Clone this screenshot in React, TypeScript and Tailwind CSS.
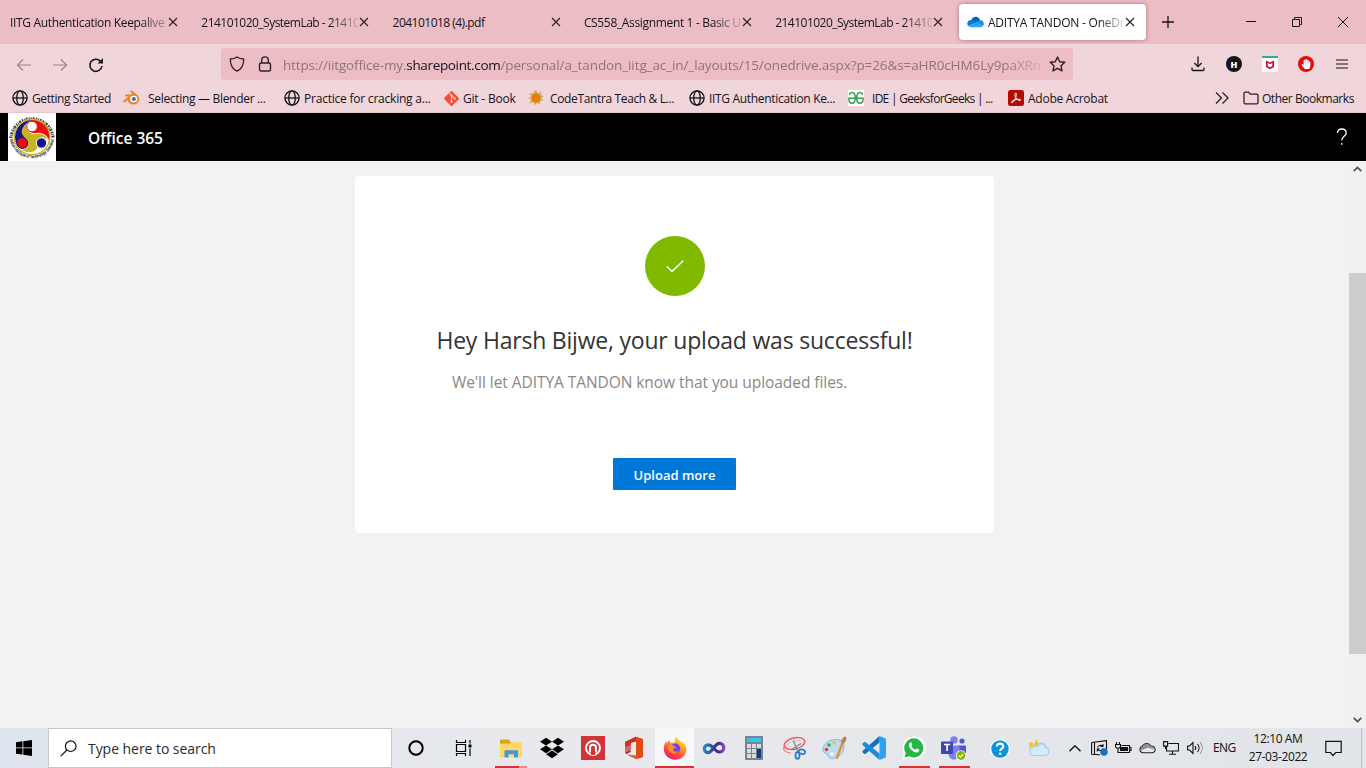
import React from "react";
import { FaDropbox, FaGitAlt, FaHandPaper } from "react-icons/fa";

/* ---------- shared icons ---------- */

const Globe = () => (
  <svg width="16" height="16" viewBox="0 0 16 16" fill="none" stroke="#15141a" strokeWidth="1.3">
    <circle cx="8" cy="8" r="7.1" />
    <ellipse cx="8" cy="8" rx="3.3" ry="7.1" />
    <path d="M1 8h14" />
  </svg>
);

const Close = () => (
  <svg width="10" height="10" viewBox="0 0 10 10" stroke="#2b2227" strokeWidth="1.15" className="shrink-0">
    <path d="M1 1l8 8M9 1L1 9" />
  </svg>
);

const Blender = () => (
  <svg width="17" height="16" viewBox="0 0 17 16" fill="none">
    <path d="M1.300 11.300L8 6M3 5.400H10M8.300 1.500L14 6" stroke="#e58325" strokeWidth="2" strokeLinecap="round" />
    <ellipse cx="10.300" cy="9.200" rx="6" ry="5.400" fill="#ea8a2a" />
    <ellipse cx="10.700" cy="9" rx="3.600" ry="3.200" fill="#fff" />
    <circle cx="10.900" cy="8.900" r="2" fill="#2f6fae" />
  </svg>
);

const Sun = () => (
  <svg width="16" height="16" viewBox="0 0 16 16">
    <path d="M8.500.5l1.300 2.700L13.500 1.500l-.8 3.600 3 1-2.200 2.200 1.700 2.600-3.300.2.3 3.500L8.800 13l-2.300 2.400-.9-3.300-4 1.400L3.200 9.500.3 8l2.900-1.500L1.500 3l3.700.6 1-3z" fill="#ccb055" />
    <circle cx="8" cy="8" r="4.500" fill="#ec7a14" />
  </svg>
);

const Acrobat = () => (
  <svg width="16" height="16" viewBox="0 0 16 16" fill="none">
    <rect width="16" height="16" rx="2.5" fill="#b30b00" />
    <path d="M7.500 3.100c1.200-.2.9 2.100.5 3.600C7.300 9 5.300 12.300 4 12.700c-1.300.2-.6-1.400 1.200-2.200 2-.9 5.200-1.500 6.900-1.100 1.300.4.5 1.500-.8 1.100-1.700-.5-3.400-2.400-4-4-.5-1.400-.7-3.200.2-3.400z" stroke="#fff" strokeWidth="1" />
  </svg>
);

const Gfg = () => (
  <svg width="16" height="16" viewBox="0 0 16 16" fill="none">
    <rect width="16" height="16" fill="#fff" />
    <path d="M1.300 4.800C2 2.500 4 2 5.300 2.700 7.300 3.800 7.300 6 7.300 8c0 3-1 5.300-3.300 5.300C2 13.300.9 11.500.9 8.200h14.200c0 3.300-1.100 5.100-3.100 5.100-2.300 0-3.300-2.300-3.300-5.300 0-2 0-4.200 2-5.300 1.300-.7 3.300-.2 4 2.100" stroke="#3a9d55" strokeWidth="1.500" />
  </svg>
);

const OneDrive = () => (
  <svg width="17" height="12" viewBox="0 0 17 12">
    <path d="M4 4.500C5 1.500 8 0 10.600 1.200c1.300.6 2.200 1.800 2.500 3L9 7z" fill="#0a64c0" />
    <path d="M4.200 4C2 3.900.3 5.500.3 7.600c0 1 .4 1.900 1 2.500L10 6.500 6.800 4.600C6 4.200 5.100 4 4.200 4z" fill="#1279d6" />
    <path d="M9 6l3.800-1.800c2.500-.2 4 1.600 4 3.600 0 .9-.3 1.600-.8 2.200z" fill="#1490df" />
    <path d="M1.300 10.100L10 6.200l6 3.800c-.6.8-1.600 1.200-2.700 1.200H4.200c-1.200 0-2.200-.4-2.900-1.100z" fill="#28a8ea" />
  </svg>
);

/* ---------- browser chrome ---------- */

const tabs = [
  { title: "IITG Authentication Keepalive", track: "tracking-[-0.34px]", fade: "[mask-image:linear-gradient(to_right,black_82%,transparent_106%)]" },
  { title: "214101020_SystemLab - 21410", track: "tracking-[-0.52px]", fade: "[mask-image:linear-gradient(to_right,black_82%,transparent_103%)]" },
  { title: "204101018 (4).pdf", track: "tracking-[-0.52px]", fade: "" },
  { title: "CS558_Assignment 1 - Basic U", track: "tracking-[-0.34px]", fade: "[mask-image:linear-gradient(to_right,black_82%,transparent_103%)]" },
  { title: "214101020_SystemLab - 21410", track: "tracking-[-0.52px]", fade: "[mask-image:linear-gradient(to_right,black_82%,transparent_103%)]" },
];

function TabStrip() {
  return (
    <div className="flex h-11 items-center bg-[#edbdc5]">
      {tabs.map((t, i) => (
        <div key={i} className="flex h-9 w-[191.3px] shrink-0 items-center pl-[10px]">
          <span className={`w-[157px] whitespace-nowrap pt-[2px] text-[12px] ${t.track} ${t.fade}`}>{t.title}</span>
          <span className="ml-[1px] flex">
            <Close />
          </span>
        </div>
      ))}
      <div className="ml-[2.5px] flex h-[36px] w-[187px] shrink-0 items-center rounded-[4px] bg-white pl-[8px] shadow-[0_0_4px_rgba(80,20,40,0.45)]">
        <OneDrive />
        <span className="ml-1 w-[136px] whitespace-nowrap pt-[2px] text-[12px] tracking-[-0.22px] [mask-image:linear-gradient(to_right,black_82%,transparent_102%)]">
          ADITYA TANDON - OneDr
        </span>
        <span className="ml-[1px] flex">
          <Close />
        </span>
      </div>
      <svg width="12" height="12" viewBox="0 0 12 12" stroke="#15141a" strokeWidth="1.3" className="ml-[16px] shrink-0">
        <path d="M6 0v12M0 6h12" />
      </svg>
      <svg width="106" height="12" viewBox="0 0 106 12" fill="none" stroke="#15141a" className="ml-auto mr-[17px] shrink-0">
        <path d="M3 5.500h10" />
        <path d="M49.500 3.500h7v7h-7zM51.500 3.500v-2h7v7h-2" />
        <path d="M95 1l10 10M105 1L95 11" />
      </svg>
    </div>
  );
}

function Toolbar() {
  return (
    <div className="flex h-[40px] items-center bg-[#f0d5da] text-[#15141a]">
      <svg width="90" height="16" viewBox="0 0 90 16" fill="none" stroke="#9c8489" strokeWidth="1.2" className="ml-[16px] mt-[1px] shrink-0">
        <path d="M15 8H1.500M7 2.500L1.500 8 7 13.500" />
        <path d="M37 8h13.500M45 2.500L50.500 8 45 13.500" />
        <path d="M84.500 4.200A6.100 6.100 0 1 0 86 9" stroke="#15141a" strokeWidth="1.500" />
        <path d="M87 1v5.500h-5.500z" fill="#15141a" stroke="none" />
      </svg>
      <div className="ml-[115px] flex h-8 w-[852px] shrink-0 items-center rounded-[4px] bg-[#edbdc5] pl-[8px]">
        <svg width="16" height="16" viewBox="0 0 16 16" fill="none" stroke="#2b2227" strokeWidth="1.3" className="shrink-0">
          <path d="M8 .9c2 1.500 4.300 2 6.700 2.100.1 5.600-2 10-6.700 12.200C3.300 13 1.200 8.600 1.300 3 3.700 2.900 6 2.400 8 .9z" strokeLinejoin="round" />
        </svg>
        <svg width="14" height="16" viewBox="0 0 14 16" fill="none" stroke="#2b2227" strokeWidth="1.4" className="ml-[13px] shrink-0">
          <rect x="1.5" y="7" width="11" height="8" rx="1.5" />
          <path d="M3.700 7V4.200a3.300 3.300 0 0 1 6.600 0V7" />
        </svg>
        <div className="ml-[11px] w-[759px] whitespace-nowrap pt-[2px] text-[13.5px] leading-[22px] tracking-[-0.16px] text-[#8f747a] [mask-image:linear-gradient(to_right,black_95%,transparent_101%)]">
          https://iitgoffice-my.
          <span className="tracking-[-0.34px] text-[#15141a]">sharepoint.com</span>
          <span className="tracking-[-0.1px]">/personal/a_tandon_iitg_ac_in/_layouts/15/onedrive.aspx?p=26&amp;s=aHR0cHM6Ly9paXRn</span>
        </div>
        <svg width="17" height="16" viewBox="0 0 17 16" fill="none" stroke="#2b2227" strokeWidth="1.4" strokeLinejoin="round" className="ml-[7px] shrink-0">
          <path d="M8.500 1l2.200 4.700 5.100.6-3.800 3.500 1 5.100-4.500-2.500L4 14.900l1-5.100L1.200 6.300l5.100-.6z" />
        </svg>
      </div>
      <svg width="14" height="16" viewBox="0 0 14 16" fill="none" stroke="#15141a" strokeWidth="1.3" className="ml-auto mr-[21px] shrink-0">
        <path d="M7 .5v10M3.300 7L7 10.700 10.700 7M1 11.500v1.800q0 1.200 1.200 1.200h9.600q1.200 0 1.200-1.200v-1.800" />
      </svg>
      <span className="mr-[20px] flex size-4 shrink-0 items-center justify-center rounded-full bg-[#15141a] text-[9px] font-extrabold leading-none text-white">
        H
      </span>
      <svg width="16" height="16" viewBox="0 0 16 16" className="mr-[20px] shrink-0">
        <rect width="16" height="16" fill="#fff" />
        <rect width="16" height="2" fill="#3fa58c" />
        <path d="M4 4.500l4 2 4-2v6.500l-4 2.200L4 11zM5.700 7v3l2.300 1.300 2.300-1.300V7L8 8.200z" fill="#c8102e" fillRule="evenodd" />
      </svg>
      <span className="mr-[22px] flex size-4 shrink-0 items-center justify-center rounded-full bg-[#e40d0d]">
        <FaHandPaper size={10} color="#fff" />
      </span>
      <svg width="12" height="10" viewBox="0 0 12 10" stroke="#15141a" strokeWidth="1.2" className="mr-[18px] shrink-0">
        <path d="M0 1h12M0 5h12M0 9h12" />
      </svg>
    </div>
  );
}

const bookmarks = [
  { w: "w-[111px]", gap: "gap-1", icon: <Globe />, text: "Getting Started", track: "tracking-[-0.4px]" },
  { w: "w-[161px]", gap: "gap-2", icon: <Blender />, text: "Selecting — Blender ...", track: "tracking-[-0.31px]" },
  { w: "w-[159px]", gap: "gap-1", icon: <Globe />, text: "Practice for cracking a...", track: "tracking-[-0.22px]" },
  { w: "w-[85px]", gap: "gap-[3px]", icon: <FaGitAlt size={17} color="#f05133" />, text: "Git - Book", track: "tracking-[-0.2px]" },
  { w: "w-[161px]", gap: "gap-[6px]", icon: <Sun />, text: "CodeTantra Teach & L...", track: "tracking-[-0.36px]" },
  { w: "w-[159px]", gap: "gap-1", icon: <Globe />, text: "IITG Authentication Ke...", track: "tracking-[-0.32px]" },
  { w: "w-[160px]", gap: "gap-2", icon: <Gfg />, text: "IDE | GeeksforGeeks | ...", track: "tracking-[-0.72px]" },
  { w: "w-[111px]", gap: "gap-1", icon: <Acrobat />, text: "Adobe Acrobat", track: "tracking-[-0.25px]" },
];

function Bookmarks() {
  return (
    <div className="flex h-[29px] items-center border-b border-[#edc3ca] bg-[#f0d5da] pl-3 text-[12px]">
      {bookmarks.map((b) => (
        <div key={b.text} className={`flex shrink-0 items-center whitespace-nowrap ${b.w} ${b.gap}`}>
          {b.icon}
          <span className={`pt-[2px] ${b.track}`}>{b.text}</span>
        </div>
      ))}
      <svg width="14" height="12" viewBox="0 0 14 12" fill="none" stroke="#2b2227" strokeWidth="1.3" className="ml-auto mr-[14px] shrink-0">
        <path d="M1 .5L6.500 6 1 11.500M7.500.5L13 6l-5.500 5.500" />
      </svg>
      <svg width="16" height="14" viewBox="0 0 16 14" fill="none" stroke="#2b2227" strokeWidth="1.3" className="mr-[3px] shrink-0">
        <path d="M1 11.500V2.500a1.300 1.300 0 0 1 1.300-1.300h3.200l1.700 2h6.500A1.300 1.300 0 0 1 15 4.500v7a1.300 1.300 0 0 1-1.300 1.300H2.300A1.300 1.300 0 0 1 1 11.500z" />
      </svg>
      <span className="w-[104px] shrink-0 whitespace-nowrap pt-[2px] tracking-[-0.47px]">Other Bookmarks</span>
    </div>
  );
}

/* ---------- page ---------- */

const Emblem = () => (
  <svg width="48" height="48" viewBox="0 0 48 48" className="shrink-0">
    <rect width="48" height="48" fill="#fff" />
    <path d="M2.800 25A21.300 21.300 0 0 1 45.200 25" fill="none" stroke="#444" strokeWidth="3.200" strokeDasharray="1.500 .9 .8 .7 2 1.100" />
    <path id="emblemArc" d="M2 26A22.200 22.200 0 0 0 46 26" fill="none" />
    <text fontSize="4.300" fill="#111" fontWeight="700" textLength="64" lengthAdjust="spacingAndGlyphs">
      <textPath href="#emblemArc">Indian Institute of Technology Guwahati</textPath>
    </text>
    <circle cx="24" cy="24" r="17.800" fill="#fff" stroke="#c8b420" strokeWidth="1.400" />
    <path d="M24 7A17 17 0 0 0 9 32c4 5 9 4 11 0 2-5-6-8-5-14 .5-5 4-9 9-11z" fill="#15158c" />
    <path d="M23 7a17 17 0 0 1 18 20c-2-5-7-8-12-7-6 1-11-3-9-9z" fill="#ee0d0d" />
    <path d="M18 11c-6 5-5 10-1 14 4 5 4 10-3 12 9 5 17 1 16-7-1-5 5-8 10-3-2-6-8-7-12-6-6 1-10-4-10-10z" fill="#c8b420" />
    <circle cx="24" cy="13.500" r="5.300" fill="#fff" stroke="#ee0d0d" />
    <circle cx="14.300" cy="30" r="5.300" fill="#ee0d0d" stroke="#15158c" />
    <circle cx="33.500" cy="30" r="5.200" fill="#15158c" stroke="#fff" />
  </svg>
);

function SuiteHeader() {
  return (
    <header className="flex h-12 items-center bg-black pl-2 text-white">
      <Emblem />
      <span className="ml-8 pt-[4px] text-[15.5px] font-semibold tracking-[0px]">Office 365</span>
      <svg width="12" height="18" viewBox="0 0 12 18" fill="none" stroke="#fff" strokeWidth="1.3" className="ml-auto mr-[18px]">
        <path d="M1.500 5C1.500 2.300 3.200 1 5.700 1s4.500 1.400 4.500 3.900c0 3-4.400 3.800-4.400 7.300" />
        <path d="M5.800 15v1.800" />
      </svg>
    </header>
  );
}

function Content() {
  return (
    <main className="flex h-[567px] bg-[#f2f2f2]">
      <div className="flex grow justify-center pt-[15px]">
        <section className="flex h-[357px] w-[639px] flex-col items-center rounded-[4px] bg-white pt-[60px]">
          <div className="flex size-[60px] items-center justify-center rounded-full bg-[#7fba00]">
            <svg width="18" height="13" viewBox="0 0 18 13" fill="none" stroke="#fff" strokeWidth="1.4" className="mt-[1px]">
              <path d="M.7 6.300l5.300 5.300L17.200.7" />
            </svg>
          </div>
          <h1 className="mt-[27px] whitespace-nowrap text-[23px] leading-[34px] tracking-[-0.21px] text-[#333]">
            Hey Harsh Bijwe, your upload was successful!
          </h1>
          <p className="mt-[14px] mr-[50px] whitespace-nowrap text-[15.5px] leading-[22px] tracking-[-0.06px] text-[#8a8886]">
            We'll let ADITYA TANDON know that you uploaded files.
          </p>
          <button className="mt-[65px] h-8 w-[123px] whitespace-nowrap rounded-[1px] bg-[#0078d7] pt-[3px] text-[13px] font-semibold text-white">
            Upload more
          </button>
        </section>
      </div>
      <div className="flex w-[17px] flex-col items-center bg-[#f1f1f1]">
        <svg width="9" height="6" viewBox="0 0 9 6" fill="none" stroke="#505050" strokeWidth="1.8" className="mt-[5px]">
          <path d="M.7 5.200L4.500 1.400l3.800 3.800" />
        </svg>
        <div className="mt-[101px] h-[381px] w-full bg-[#cdcdcd]" />
        <svg width="9" height="6" viewBox="0 0 9 6" fill="none" stroke="#505050" strokeWidth="1.8" className="mt-auto mb-[5px]">
          <path d="M.7.8l3.800 3.800L8.300.8" />
        </svg>
      </div>
    </main>
  );
}

/* ---------- taskbar ---------- */

const Explorer = () => (
  <svg width="22" height="19" viewBox="0 0 22 19">
    <path d="M0 1.500C0 .7.500.500 1 .500h8l1.500 2.500H21v15H1c-.6 0-1-.4-1-1z" fill="#dba21a" />
    <path d="M0 4.500h10l1.500-1.500H21c.5 0 1 .3 1 .8V17c0 .6-.4 1-1 1H1c-.6 0-1-.4-1-1z" fill="#ffd76b" />
    <path d="M4.500 18.500v-6c0-.8.500-1.300 1.300-1.300h11c.8 0 1.200.5 1.200 1.300v6h-4v-3.300H8.500v3.300z" fill="#3c9bdc" />
  </svg>
);

const RedApp = () => (
  <svg width="24" height="24" viewBox="0 0 24 24" fill="none">
    <rect width="24" height="24" fill="#d13438" />
    <circle cx="12" cy="12" r="7" stroke="#fff" strokeWidth="1.900" />
    <path d="M9 16.500v-4.700a3 3 0 0 1 6 0v4.700" stroke="#fff" strokeWidth="1.900" />
    <path d="M10 17.500h4" stroke="#d13438" strokeWidth="3" />
  </svg>
);

const Office = () => (
  <svg width="20" height="24" viewBox="0 0 20 24">
    <path d="M1 6L12 .8l1.500.5V5L6.500 7v9L2.500 18 1 17z" fill="#b5201c" />
    <path d="M1 6L12 .8V5L6.500 7v6L1 17z" fill="#c8321f" />
    <path d="M12 .8L19 3v18l-7 2.200z" fill="#e34a12" />
    <path d="M2.500 18.500L12 19.500V23.200z" fill="#e2574e" />
    <path d="M1 11v6l5.500-3V9z" fill="#d9627a" />
  </svg>
);

const Firefox = () => (
  <svg width="24" height="24" viewBox="0 0 24 24">
    <defs>
      <linearGradient id="ffOuter" x1=".8" y1="0" x2=".25" y2="1">
        <stop offset="0" stopColor="#fff04a" />
        <stop offset=".4" stopColor="#ff9a1f" />
        <stop offset=".75" stopColor="#ff3a4c" />
        <stop offset="1" stopColor="#e3158a" />
      </linearGradient>
    </defs>
    <path d="M13.500.5c.4 2 2 3 3.500 4.500 1 .9 1.600 1.800 2 2.800.3-.7.3-1.500.1-2.300 2.600 2 4.200 5 4.200 7.700 0 6-5 10.500-11.100 10.500C5.700 23.700.8 19 .8 12.800c0-2.800.9-5.600 2.700-7.500 0 .7.1 1.300.4 1.800C4.800 5.500 5.500 4.700 6.700 4c-.1 1 .2 2.200.9 3 1.900-.6 3.400-.5 4.700 0-1-2-.7-4.700 1.200-6.500z" fill="url(#ffOuter)" />
    <circle cx="12.200" cy="12.500" r="5" fill="#7542e5" />
    <path d="M5.500 9.500c2-1 4.500-.6 5.700.5.800.8 1.500 1 2.300 1-.6 1.600-3 1.200-3.500 2.500-.5 1.500 2.500 3 5 1.500-1.500 3.500-7 3.500-9 .2-1-1.600-1.100-3.800-.5-5.700z" fill="#ff8a2a" />
  </svg>
);

const VisualStudio = () => (
  <svg width="24" height="16" viewBox="0 0 24 16" fill="none">
    <defs>
      <linearGradient id="vsLoop" x1="0" y1="0" x2="1" y2="0">
        <stop offset="0" stopColor="#2d86bd" />
        <stop offset=".45" stopColor="#264a94" />
        <stop offset=".7" stopColor="#4b1f85" />
        <stop offset="1" stopColor="#7a4fb0" />
      </linearGradient>
    </defs>
    <path
      d="M12.300 9C10 6 8.500 4.800 6.300 4.800A3.900 3.900 0 0 0 2.300 8.600c0 2.400 1.700 4 3.900 4C10 12.600 12.500 3.300 17.500 3.300c2.600 0 4.300 1.900 4.300 4.300s-1.700 4.400-4.100 4.400c-2.200 0-3.700-1.200-5.400-3z"
      stroke="url(#vsLoop)"
      strokeWidth="3.200"
    />
  </svg>
);

const Calculator = () => (
  <svg width="18" height="24" viewBox="0 0 18 24">
    <rect width="18" height="24" rx=".7" fill="#7a8490" />
    <rect x="2" y="2" width="14" height="4" fill="#32c5f4" />
    <path d="M2 8h4v4H2zM7 8h4v4H7zM12 8h4v4h-4zM2 13h4v4H2zM7 13h4v4H7zM2 18h4v4H2zM7 18h4v4H7z" fill="#d9dde0" />
    <path d="M12 13h4v9h-4z" fill="#0b3f82" />
  </svg>
);

const Snip = () => (
  <svg width="24" height="24" viewBox="0 0 24 24" fill="none">
    <ellipse cx="12.500" cy="7.500" rx="10.500" ry="5.600" stroke="#ee5a5f" strokeWidth="1.500" transform="rotate(-14 12.500 7.500)" />
    <path d="M2 11c-1.500 3 2 6 7 6" stroke="#f08083" strokeWidth="1.200" />
    <path d="M4.500 10.500C5 7 12 4 18.500 4.500" stroke="#f6b4b5" />
    <path d="M11.300 4.500l4.700 11.500M19 7.500L9.500 13.500" stroke="#858c94" strokeWidth="1.400" />
    <g stroke="#2b7cd0" strokeWidth="1.800">
      <ellipse cx="15.500" cy="19.500" rx="2" ry="3.300" />
      <ellipse cx="20" cy="15.700" rx="3.200" ry="2.200" transform="rotate(15 20 15.700)" />
    </g>
  </svg>
);

const Paint = () => (
  <svg width="25" height="24" viewBox="0 0 25 24">
    <path d="M1 15C-.3 9 6 3.800 13 3.500c5-.2 8.800 2 9 6.500.3 6-5 12.500-12 12.500-4 0-3.500-3-5-4.500-1.200-1.200-3.500-1-4-3z" fill="#b8dcf0" stroke="#7fa9c4" strokeWidth=".8" />
    <circle cx="7" cy="9" r="1.800" fill="#3fae49" />
    <circle cx="12" cy="6.800" r="1.800" fill="#f2c230" />
    <circle cx="4.500" cy="13.500" r="1.700" fill="#e23b2e" />
    <circle cx="10" cy="18" r="1.800" fill="#fff" />
    <path d="M20.500 6.500L15 22" stroke="#e2902f" strokeWidth="2.300" strokeLinecap="round" />
    <path d="M18.500 4.500c1.500 0 2-4 5-4 2 1.500.5 6-2.500 7.500z" fill="#b58356" />
  </svg>
);

const VsCode = () => (
  <svg width="24" height="24" viewBox="0 0 24 24">
    <path d="M17.500 0L24 2.700v18.600L17.500 24z" fill="#2ea3ec" />
    <path d="M17.500 0v6.500L3 18.200.5 16.500v-1.400z" fill="#1272b6" />
    <path d="M17.500 24v-6.500L3 5.800.5 7.500v1.400z" fill="#1c8ad4" />
  </svg>
);

const WhatsApp = () => (
  <svg width="24" height="24" viewBox="0 0 24 24">
    <path d="M12 .5A11.500 11.500 0 0 0 2 17.500L.5 23.500l6-1.500A11.500 11.500 0 1 0 12 .5z" fill="#fff" />
    <path d="M12 2.300A9.600 9.600 0 0 0 3.800 17L2.500 21.500 7 20.300A9.600 9.600 0 1 0 12 2.300z" fill="#25b845" />
    <path d="M8.200 6.500c.5-.3 1-.2 1.300.4l.8 1.800c.2.500-.9 1.300-.7 1.700.8 1.500 2 2.600 3.700 3.300.5.1 1.200-1.400 1.700-1.200l2 1c.5.300 0 1.900-.7 2.500-3.500 2-9.500-3.500-9.300-7 .1-1.200.6-2 1.200-2.500z" fill="#fff" />
  </svg>
);

const Teams = () => (
  <svg width="26" height="25" viewBox="0 0 26 25">
    <circle cx="21" cy="5" r="2.600" fill="#5059c9" />
    <circle cx="13" cy="4" r="3.700" fill="#7b83eb" />
    <path d="M17 9.500h7c.6 0 1 .4 1 1v6c0 3-2 4.500-4.500 4.500S17 19 17 17z" fill="#5059c9" />
    <path d="M8 9.500h10.500V17c0 4-2.500 6.500-5.700 6.500S7.500 21 7.500 17.500z" fill="#7b83eb" />
    <rect x="0" y="5.500" width="12" height="12.500" rx="1" fill="#4048b0" />
    <path d="M3 8.500h6.200M6.100 8.500v6.500" stroke="#fff" strokeWidth="1.700" />
    <circle cx="20" cy="19.500" r="5.200" fill="#fff" />
    <circle cx="20" cy="19.500" r="4.400" fill="#84b800" />
    <path d="M17.800 19.600l1.600 1.600 2.900-3" fill="none" stroke="#fff" strokeWidth="1.200" />
  </svg>
);

const apps: { w: string; icon: React.ReactNode; cell?: string; bar?: React.ReactNode }[] = [
  {
    w: "w-[41px]",
    icon: <Explorer />,
    bar: (
      <div className="ml-[5px] flex h-[2px] w-8 bg-[#e98a8e]">
        <div className="w-6 bg-[#d13438]" />
      </div>
    ),
  },
  { w: "w-[41px]", icon: <FaDropbox size={24} color="#000" /> },
  { w: "w-[41px]", icon: <RedApp /> },
  { w: "w-[42px]", icon: <Office /> },
  { w: "w-[39px]", icon: <Firefox />, cell: "bg-[#f8f8f9]", bar: <div className="h-[2px] w-full bg-[#d13438]" /> },
  { w: "w-[40px]", icon: <VisualStudio /> },
  { w: "w-[40px]", icon: <Calculator /> },
  { w: "w-[40px]", icon: <Snip /> },
  { w: "w-[40px]", icon: <Paint /> },
  { w: "w-[40px]", icon: <VsCode /> },
  { w: "w-[40px]", icon: <WhatsApp />, bar: <div className="mx-auto h-[2px] w-[31px] bg-[#d13438]" /> },
  { w: "w-[40px]", icon: <Teams />, bar: <div className="mx-auto h-[2px] w-[31px] bg-[#d13438]" /> },
];

function Tray() {
  return (
    <div className="flex grow items-center">
      <svg width="20" height="20" viewBox="0 0 20 20" className="ml-[16px] mt-[2px] shrink-0">
        <circle cx="10" cy="10" r="9.800" fill="#fff" />
        <circle cx="10" cy="10" r="8.700" fill="#0a95d9" />
        <path d="M6.800 7.600C6.800 5.600 8.200 4.600 10 4.600s3.300 1.100 3.300 2.900c0 2.200-3.100 2.200-3.100 4.600" fill="none" stroke="#fff" strokeWidth="2.100" />
        <circle cx="10.200" cy="14.700" r="1.300" fill="#fff" />
      </svg>
      <svg width="24" height="20" viewBox="0 0 24 20" className="mb-[2px] ml-[17px] shrink-0">
        <path d="M9.500.5C9 3.500 11 6.500 14 7l-4.500 6L1 10.500C5 10 9 6 9.500.5z" fill="#f8c41c" />
        <path d="M4 4.200l.9 1.900 2 .3-1.500 1.400.4 2.100L4 8.900 2.200 9.900l.4-2.100-1.500-1.400 2-.3z" fill="#f8c41c" />
        <path d="M6.500 19a4.600 4.600 0 0 1-.6-9.100C6.800 8.300 8.600 7.800 10.200 8.300c2.200-4.500 8.400-3.600 9 1.400C24 10.200 23.800 18.600 18.500 19z" fill="#a3d0f2" />
        <path d="M6.500 18c-3.800-.2-4.500-5.500-.5-7 2-1.800 3.500-1.500 4.500-.8C12.500 6 18 7 18 11c4.500-.3 4.800 6.500 0 7z" fill="#d3ebfb" />
      </svg>
      <svg width="12" height="7" viewBox="0 0 12 7" fill="none" stroke="#111" strokeWidth="1.4" className="ml-[18px] shrink-0">
        <path d="M.5 6.300L6 .8l5.500 5.500" />
      </svg>
      <svg width="17" height="16" viewBox="0 0 17 16" fill="none" className="ml-[10px] shrink-0">
        <path d="M.6 2.500L15.500.6V9M.6 2.500v11.700L9 14.700M3.500 2.200v12" stroke="#111" strokeWidth="1.100" />
        <path d="M6.500 7.500c.5-2 3.500-3 5.300-1.200M12 4v2.500H9.500M12 8.500c-.5 2-3.500 3-5 1M6.300 11.500V9h2.500" stroke="#111" strokeWidth="1.100" />
        <circle cx="13" cy="12" r="3.700" fill="#1a6cc4" />
      </svg>
      <svg width="17" height="14" viewBox="0 0 17 14" fill="none" stroke="#111" strokeWidth="1.1" className="ml-[7px] shrink-0">
        <path d="M1.500 1v2.500M4.500 1v2.500M.5 3.500h5v2C5.500 7 4 7.200 3 7.200S.5 7 .5 5.500zM3 7.200v4.300h11.500v-7H6.500M14.500 6.500h1.500v3h-1.500" />
        <path d="M5 6h8v4H5z" fill="#111" stroke="none" />
      </svg>
      <svg width="17" height="12" viewBox="0 0 17 12" className="ml-[7px] shrink-0">
        <path d="M4 10.800a3.300 3.300 0 0 1-.5-6.500C5 .8 10 .3 12 4c5-.3 5.500 6.800 1 6.800z" fill="#e8e8e8" stroke="#222" strokeWidth="1.100" />
        <path d="M3.300 4.600C5 1.300 10 .8 12 4.300l1 .3L16 8 9 5.500 2 8.500c-.8-2 0-3.600 1.300-3.900z" fill="#8e8e8e" />
      </svg>
      <svg width="16" height="14" viewBox="0 0 16 14" fill="none" stroke="#111" strokeWidth="1.1" className="ml-[7px] shrink-0">
        <path d="M5.500 2.500h10v7.500H3.500V5.500M9.500 10v3M6 13.300h7M.6.6h4v4.500h-4zM2.500 5v3" />
      </svg>
      <svg width="17" height="14" viewBox="0 0 17 14" fill="none" stroke="#111" strokeWidth="1.1" className="ml-[8px] shrink-0">
        <path d="M.6 5h2L6 1.500v11L2.600 9h-2zM8 5c1 1.200 1 2.800 0 4M10.500 3c2 2.300 2 5.700 0 8" />
        <path d="M13 1.200c3 3.500 3 8.100 0 11.600" stroke="#999" />
      </svg>
      <span className="ml-[9px] w-[24px] whitespace-nowrap text-[12px] tracking-[-0.6px] text-[#111]">ENG</span>
      <div className="ml-[10px] flex w-[62px] flex-col items-center whitespace-nowrap text-[12px] leading-[18px] tracking-[-0.4px] text-[#111]">
        <span>12:10 AM</span>
        <span>27-03-2022</span>
      </div>
      <svg width="17" height="17" viewBox="0 0 17 17" fill="none" stroke="#111" strokeWidth="1.2" className="ml-[16px] shrink-0">
        <path d="M.8 1.300h15.400v11.200h-5.500L8 15.500l-2.500-3H.8z" />
      </svg>
      <div className="ml-auto mr-[4px] h-10 w-px bg-[#b9bec6]" />
    </div>
  );
}

function Taskbar() {
  return (
    <footer className="flex h-10 bg-linear-to-r from-[#dfe5ee] via-[#e8e9ec] via-45% to-[#e1e4e9]">
      <div className="flex w-12 shrink-0 items-center justify-center">
        <svg width="16" height="16" viewBox="0 0 16 16" fill="#000">
          <path d="M0 2.200L6.500 1.300v6.200H0zM7.300 1.200L16 0v7.500H7.300zM0 8.300h6.500v6.300L0 13.700zM7.300 8.300H16V16l-8.700-1.200z" />
        </svg>
      </div>
      <div className="flex w-[344px] shrink-0 items-center border border-[#c6c8cb] bg-white pl-[11px]">
        <svg width="17" height="17" viewBox="0 0 17 17" fill="none" stroke="#111" strokeWidth="1.2">
          <circle cx="10.7" cy="6.2" r="5.3" />
          <path d="M6.900 10L.7 16.200" />
        </svg>
        <span className="ml-[11px] whitespace-nowrap text-[14px] tracking-[-0.05px] text-[#2b2b2b]">Type here to search</span>
      </div>
      <div className="flex w-12 shrink-0 items-center justify-center">
        <svg width="16" height="16" viewBox="0 0 16 16" fill="none" stroke="#000" strokeWidth="2">
          <circle cx="8" cy="8" r="6.7" />
        </svg>
      </div>
      <div className="flex w-[50px] shrink-0 items-center pl-[15px]">
        <svg width="18" height="16" viewBox="0 0 18 16" fill="none" stroke="#000" strokeWidth="1.2">
          <path d="M1.500 4.500h9v7h-9zM1.500 0v2.500h9V0M1.500 16v-2.500h9V16M15 0v3.500M15 8.500V16" />
          <path d="M13.500 4.500h3v3h-3z" fill="#000" stroke="none" />
        </svg>
      </div>
      {apps.map((a, i) => (
        <div key={i} className={`flex shrink-0 flex-col ${a.w} ${a.cell ?? ""}`}>
          <div className="flex h-[38px] items-center justify-center pt-[2px]">{a.icon}</div>
          {a.bar}
        </div>
      ))}
      <Tray />
    </footer>
  );
}

export default function App() {
  return (
    <div className="flex h-[768px] w-[1366px] flex-col overflow-hidden font-['Open_Sans','Noto_Sans',sans-serif] text-[#15141a]">
      <TabStrip />
      <Toolbar />
      <Bookmarks />
      <SuiteHeader />
      <Content />
      <Taskbar />
    </div>
  );
}
